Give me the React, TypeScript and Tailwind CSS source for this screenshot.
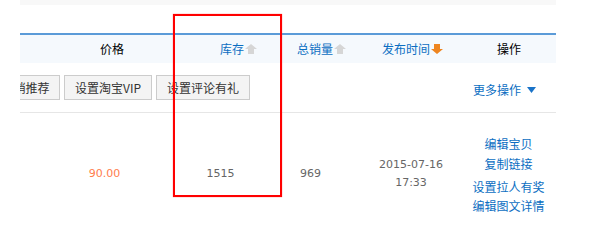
import React from "react";

const cjk = "font-['Noto_Sans_CJK_SC','Noto_Sans',sans-serif]";
const num = "font-['DejaVu_Sans',sans-serif]";

function UpArrow({ color }: { color: string }) {
  return (
    <svg width="12" height="10" viewBox="0 0 12 10" className="ml-[1px] shrink-0">
      <polygon points="6,0 12,5 9,5 9,10 3,10 3,5 0,5" fill={color} />
    </svg>
  );
}

function DownArrow({ color }: { color: string }) {
  return (
    <svg width="12" height="10" viewBox="0 0 12 10" className="ml-[1px] shrink-0">
      <polygon points="3,0 9,0 9,5 12,5 6,10 0,5 3,5" fill={color} />
    </svg>
  );
}

export default function App() {
  return (
    <div className={`relative w-[607px] h-[224px] overflow-hidden bg-white ${cjk}`}>
      <div className="ml-[20px] w-[536px]">
        <div className="h-[5px] bg-[#f8f8f8]" />
        <div className="h-[28px]" />
        <div className="h-[2px] bg-[#5b9bd8]" />
        {/* header */}
        <div className="flex h-[28px] items-center bg-[#f5f9fd] text-[12px] leading-[28px]">
          <div className="w-[80px] shrink-0" />
          <div className="w-[120px] shrink-0 text-black">价格</div>
          <div className="flex w-[77px] shrink-0 items-center text-[#0b6ec2]">
            库存
            <UpArrow color="#d6d6d6" />
          </div>
          <div className="flex w-[85px] shrink-0 items-center text-[#0b6ec2]">
            总销量
            <UpArrow color="#d6d6d6" />
          </div>
          <div className="flex w-[115px] shrink-0 items-center text-[#0b6ec2]">
            发布时间
            <DownArrow color="#ee8520" />
          </div>
          <div className="text-black">操作</div>
        </div>
        {/* toolbar */}
        <div className="mt-[12px] flex h-[25px] items-center justify-between overflow-hidden">
          <div className="flex gap-[4px] text-[12px] text-[#333]">
            <div className="ml-[-53px] flex h-[25px] w-[93px] shrink-0 items-center justify-center border border-[#cccccc] bg-[#f4f4f4]">
              设置营销推荐
            </div>
            <div className="flex h-[25px] w-[88px] shrink-0 items-center justify-center border border-[#cccccc] bg-[#f4f4f4]">
              设置淘宝VIP
            </div>
            <div className="flex h-[25px] w-[94px] shrink-0 items-center justify-center border border-[#cccccc] bg-[#f4f4f4]">
              设置评论有礼
            </div>
          </div>
          <div className="mr-[20px] mt-[5px] flex items-center text-[12px] leading-[16px] text-[#0b6ec2]">
            更多操作
            <svg width="9" height="6" viewBox="0 0 9 6" className="ml-[6px]">
              <polygon points="0,0 9,0 4.5,6" fill="#1a73c8" />
            </svg>
          </div>
        </div>
        <div className="mt-[12px] h-[1px] bg-[#e6e6e6]" />
        {/* body row */}
        <div className="flex h-[122px] items-center">
          <div className="w-[37px] shrink-0" />
          <div className={`w-[95px] shrink-0 text-center text-[11px] text-[#ff7d4d] ${num}`}>90.00</div>
          <div className={`w-[137px] shrink-0 text-center text-[11px] text-[#666] ${num}`}>1515</div>
          <div className={`w-[43px] shrink-0 text-center text-[11px] text-[#666] ${num}`}>969</div>
          <div className="w-[29px] shrink-0" />
          <div className={`w-[100px] shrink-0 text-center text-[11px] leading-[18px] text-[#666] ${num}`}>
            <div>2015-07-16</div>
            <div>17:33</div>
          </div>
          <div className="w-[95px] shrink-0 text-center text-[12px] text-[#0b6ec2]">
            <div className="h-[20px] leading-[20px]">编辑宝贝</div>
            <div className="h-[20px] leading-[20px]">复制链接</div>
            <div className="mt-[3px] h-[20px] leading-[20px]">设置拉人有奖</div>
            <div className="h-[17px] leading-[17px]">编辑图文详情</div>
          </div>
        </div>
      </div>
      {/* red annotation box */}
      <div className="pointer-events-none absolute left-[173px] top-[14px] h-[183px] w-[109px] border-2 border-[#ff0000] shadow-[0_0_1px_#ff6666]" />
    </div>
  );
}
